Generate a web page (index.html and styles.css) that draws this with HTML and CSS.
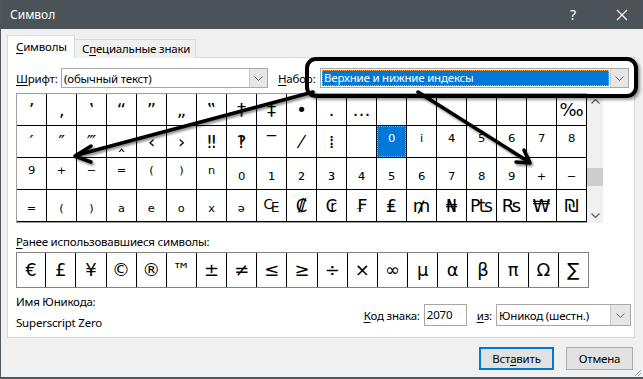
FILE: index.html
```html
<!DOCTYPE html>
<html lang="ru">
<head>
  <meta charset="UTF-8">
  <title>Символ</title>
  <link rel="stylesheet" href="styles.css">
</head>
<body>
  <div class="window">
    <div class="titlebar">
      <span class="title">Символ</span>
      <span class="help">?</span>
      <svg class="close" width="12" height="12" viewBox="0 0 12 12">
        <path d="M1 1L11 11M11 1L1 11" stroke="#fff" stroke-width="1.2" fill="none"/>
      </svg>
    </div>

    <div class="tabs">
      <div class="tab active"><u>С</u>имволы</div>
      <div class="tab">С<u>п</u>ециальные знаки</div>
    </div>

    <div class="panel">
      <div class="font-row">
        <span class="font-label"><u>Ш</u>рифт:</span>
        <div class="select font-select">
          <span class="select-text">(обычный текст)</span>
          <span class="drop"><svg width="9" height="5" viewBox="0 0 9 5"><path d="M0.5 0.5L4.5 4.5L8.5 0.5" stroke="#606060" fill="none"/></svg></span>
        </div>
        <span class="set-label"><u>Н</u>абор:</span>
        <div class="select set-select">
          <span class="select-text picked">Верхние и нижние индексы</span>
          <span class="drop"><svg width="9" height="5" viewBox="0 0 9 5"><path d="M0.5 0.5L4.5 4.5L8.5 0.5" stroke="#606060" fill="none"/></svg></span>
        </div>
      </div>

      <div class="grid-row">
        <div class="char-grid" id="charGrid"></div>
        <div class="scrollbar">
          <svg class="sb-up" width="9" height="5" viewBox="0 0 9 5"><path d="M0.5 4.5L4.5 0.5L8.5 4.5" stroke="#606060" stroke-width="1.3" fill="none"/></svg>
          <div class="sb-thumb"></div>
          <svg class="sb-down" width="9" height="5" viewBox="0 0 9 5"><path d="M0.5 0.5L4.5 4.5L8.5 0.5" stroke="#606060" stroke-width="1.3" fill="none"/></svg>
        </div>
      </div>

      <div class="recent-label"><u>Р</u>анее использовавшиеся символы:</div>
      <div class="recent" id="recentList"></div>

      <div class="info-row">
        <div class="uname">
          <div>Имя Юникода:</div>
          <div class="uname-value">Superscript Zero</div>
        </div>
        <div class="code-box">
          <span><u>К</u>од знака:</span>
          <div class="code-input">2070</div>
          <span class="from-label"><u>и</u>з:</span>
          <div class="select from-select">
            <span class="select-text">Юникод (шестн.)</span>
            <span class="drop"><svg width="9" height="5" viewBox="0 0 9 5"><path d="M0.5 0.5L4.5 4.5L8.5 0.5" stroke="#606060" fill="none"/></svg></span>
          </div>
        </div>
      </div>
    </div>

    <div class="buttons">
      <div class="btn default">Вст<u>а</u>вить</div>
      <div class="btn">Отмена</div>
    </div>

    <svg class="grip" width="10" height="10" viewBox="0 0 10 10">
      <path d="M9 3L3 9M9 6L6 9" stroke="#a0a0a0" fill="none"/>
    </svg>

    <!-- пометки поверх скриншота -->
    <div class="mark-box"></div>
    <svg class="arrows" width="643" height="379" viewBox="0 0 643 379">
      <g stroke="#000" stroke-width="3.5" fill="none" stroke-linecap="round" stroke-linejoin="round" filter="url(#sh)">
        <path d="M313 92L77 155"/>
        <path d="M91 146L75 156L91 162"/>
        <path d="M418 92L529 162"/>
        <path d="M524 150L530 163L516 162"/>
      </g>
      <defs>
        <filter id="sh" x="-10%" y="-10%" width="120%" height="130%">
          <feDropShadow dx="1.5" dy="2" stdDeviation="1.2" flood-color="#000" flood-opacity="0.45"/>
        </filter>
      </defs>
    </svg>
  </div>

  <script>
    // таблица символов: 4 строки по 19
    const rows = [
      ['’','‚','‛','“','”','„','‟','†','‡','•','․','…','','','','','','','‰'],
      ['′','″','‴','‸','‹','›','‼','‽','‾','⁄','⁞','','⁰','ⁱ','⁴','⁵','⁶','⁷','⁸'],
      ['⁹','⁺','⁻','⁼','⁽','⁾','ⁿ','₀','₁','₂','₃','₄','₅','₆','₇','₈','₉','₊','₋'],
      ['₌','₍','₎','ₐ','ₑ','ₒ','ₓ','ₔ','₠','₡','₢','₣','₤','₥','₦','₧','₨','₩','₪']
    ];
    const recent = ['€','£','¥','©','®','™','±','≠','≤','≥','÷','×','∞','µ','α','β','π','Ω','∑'];

    const grid = document.getElementById('charGrid');
    rows.forEach((row, r) => {
      row.forEach((ch, c) => {
        const cell = document.createElement('div');
        cell.className = 'cell' + (r === 1 && c === 12 ? ' selected' : '');
        cell.innerHTML = '<span>' + (ch || '&nbsp;') + '</span>';
        grid.appendChild(cell);
      });
    });

    const list = document.getElementById('recentList');
    recent.forEach(ch => {
      const cell = document.createElement('div');
      cell.className = 'recent-cell';
      cell.textContent = ch;
      list.appendChild(cell);
    });
  </script>
</body>
</html>
```

FILE: styles.css
```css
body {
  margin: 0;
  font-family: "Noto Sans", "Open Sans", sans-serif;
  font-size: 11.5px;
  letter-spacing: -0.2px;
  color: #000;
  background: #f0f0f0;
  overflow: hidden;
}
u {
  text-decoration-thickness: 1px;
  text-underline-offset: 2px;
}
.window {
  position: relative;
  width: 643px;
  height: 379px;
  box-sizing: border-box;
  border-left: 1px solid #50575d;
  border-bottom: 2px solid #50575d;
  background: #f0f0f0;
}
.titlebar {
  height: 29px;
  background: #4b5258;
  color: #fff;
  display: flex;
  align-items: center;
  padding-left: 9px;
}
.title {
  flex: 1;
  font-size: 12px;
  letter-spacing: 0;
}
.help {
  font-size: 14px;
  margin-right: 40px;
}
.close {
  margin-right: 15px;
}
.tabs {
  display: flex;
  align-items: flex-end;
  margin: 6px 0 0 6px;
  height: 23px;
}
.tab {
  height: 19px;
  line-height: 18px;
  box-sizing: border-box;
  padding: 0 7px;
  border: 1px solid #d9d9d9;
  border-bottom: none;
  border-left: none;
  background: #f0f0f0;
  width: 121px;
  white-space: nowrap;
}
.tab.active {
  height: 23px;
  line-height: 21px;
  width: 68px;
  padding-left: 8px;
  border-left: 1px solid #d9d9d9;
  background: #fff;
  position: relative;
  z-index: 1;
}
.panel {
  margin: -1px 0 0 6px;
  width: 628px;
  height: 281px;
  box-sizing: border-box;
  border: 1px solid #d9d9d9;
  background: #fff;
  padding: 10px 0 0 8px;
}
.font-row {
  display: flex;
  align-items: center;
  height: 20px;
}
.font-label {
  width: 45px;
  white-space: nowrap;
}
.set-label {
  margin-left: 10px;
  width: 42px;
  white-space: nowrap;
}
.select {
  height: 20px;
  box-sizing: border-box;
  border: 1px solid #a8a8a8;
  background: #fff;
  display: flex;
  align-items: center;
}
.select-text {
  flex: 1;
  padding-left: 2px;
  white-space: nowrap;
}
.drop {
  width: 17px;
  align-self: stretch;
  background: #e6e6e6;
  border-left: 1px solid #c8c8c8;
  display: flex;
  align-items: center;
  justify-content: center;
}
.font-select {
  width: 207px;
}
.set-select {
  width: 309px;
}
.select-text.picked {
  margin: 1px;
  padding-left: 2px;
  height: 16px;
  line-height: 15px;
  background: #0078d7;
  color: #fff;
  outline: 1px dotted #f0a040;
  outline-offset: -1px;
}
.grid-row {
  display: flex;
  margin-top: 5px;
}
.char-grid {
  display: grid;
  grid-template-columns: repeat(19, 30px);
  grid-auto-rows: 32px;
  border: 1px solid #a0a0a0;
  border-right: none;
  font-family: "DejaVu Sans", sans-serif;
  font-size: 18px;
  letter-spacing: 0;
}
.cell {
  border-right: 1px solid #000;
  border-bottom: 1px solid #000;
  text-align: center;
  line-height: 31px;
  overflow: hidden;
}
.cell.selected span {
  display: block;
  height: 31px;
  background: #0078d7;
  color: #fff;
  outline: 1px dotted #f0a040;
  outline-offset: -1px;
}
.scrollbar {
  width: 16px;
  height: 130px;
  background: #f0f0f0;
  display: flex;
  flex-direction: column;
  align-items: center;
}
.sb-up {
  margin-top: 6px;
}
.sb-thumb {
  width: 16px;
  height: 18px;
  background: #cdcdcd;
  margin-top: 64px;
}
.sb-down {
  margin-top: 27px;
}
.recent-label {
  margin-top: 11px;
  line-height: 16px;
}
.recent {
  display: flex;
  margin-top: 2px;
  width: 573px;
  height: 36px;
  box-sizing: border-box;
  border: 1px solid #828282;
  font-family: "DejaVu Sans", sans-serif;
  font-size: 18px;
  letter-spacing: 0;
}
.recent-cell {
  width: 30px;
  line-height: 34px;
  text-align: center;
  border-left: 1px solid #000;
}
.recent-cell:first-child {
  width: 29px;
  border-left: none;
}
.info-row {
  display: flex;
  justify-content: space-between;
  margin-top: 6px;
  padding-right: 3px;
}
.uname div {
  line-height: 16px;
}
.uname .uname-value {
  margin-top: 5px;
}
.code-box {
  display: flex;
  align-items: center;
  margin-top: 10px;
  height: 22px;
}
.code-input {
  width: 43px;
  height: 22px;
  box-sizing: border-box;
  border: 1px solid #a8a8a8;
  line-height: 20px;
  padding-left: 2px;
  margin-left: 4px;
}
.from-label {
  margin-left: 10px;
}
.from-select {
  width: 135px;
  height: 22px;
  margin-left: 4px;
}
.from-select .drop {
  width: 19px;
}
.buttons {
  display: flex;
  justify-content: flex-end;
  gap: 12px;
  margin-top: 9px;
  padding-right: 10px;
}
.btn {
  width: 67px;
  height: 23px;
  box-sizing: border-box;
  border: 1px solid #adadad;
  background: #e1e1e1;
  text-align: center;
  line-height: 21px;
}
.btn.default {
  width: 75px;
  border: 2px solid #0078d7;
  line-height: 19px;
}
.grip {
  position: absolute;
  right: 1px;
  bottom: 0;
}
.mark-box {
  position: absolute;
  left: 304px;
  top: 57px;
  width: 333px;
  height: 41px;
  box-sizing: border-box;
  border: 4px solid #000;
  border-radius: 11px;
  box-shadow: 2px 2px 3px rgba(0,0,0,0.4);
}
.arrows {
  position: absolute;
  left: -1px;
  top: 0;
  pointer-events: none;
}
```
